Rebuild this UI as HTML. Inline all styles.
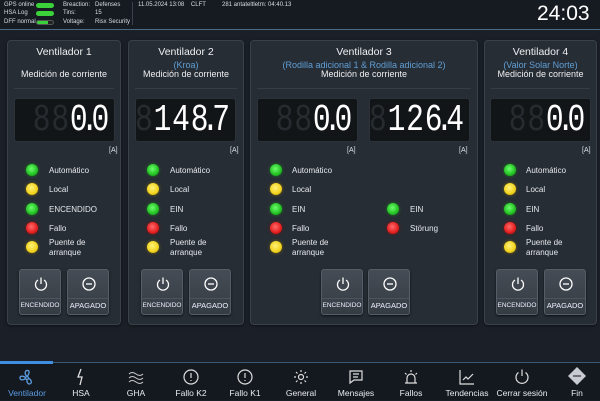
<!DOCTYPE html>
<html><head><meta charset="utf-8"><style>
*{margin:0;padding:0;box-sizing:border-box}
body{width:600px;height:400px;background:#1b2028;font-family:"Liberation Sans",sans-serif;color:#e6e9ec;position:relative;overflow:hidden}
.a{position:absolute;white-space:nowrap}
.top{position:absolute;left:0;top:0;width:600px;height:30px;background:#161b22;border-bottom:1px solid #4a6a85}
.s{font-size:6px;color:#d8dde2}
.pill{position:absolute;width:18px;height:5px;border-radius:3px;background:#3bd13b}
.panel{position:absolute;top:40px;height:285px;background:#272d35;border:1px solid #3a414a;border-radius:4px;box-shadow:0 1px 3px #0008}
.t{position:absolute;left:0;right:0;text-align:center;font-size:10.5px;color:#eef0f2}
.sub{color:#5f9fd6}
.hr{position:absolute;height:1px;background:#363d46;top:47px}
.disp{position:absolute;top:57px;height:44px;width:101px;background:#121518;border:1px solid #2c3238;border-radius:3px;overflow:hidden}
.num{position:absolute;right:4px;top:-1px;font-family:"Liberation Mono",monospace;font-size:38px;line-height:46px;color:#fff;letter-spacing:1px;transform:scaleX(.78);transform-origin:right}
.num .g{color:#262b30}
.num .p{margin:0 -10px 0 -10px}
.unit{position:absolute;top:106px;font-size:7px;color:#dfe3e6}
.led{position:absolute;width:12px;height:12px;border-radius:50%}
.gr{background:radial-gradient(circle at 45% 40%,#6bff6b,#22c022 60%,#137a13);box-shadow:0 0 3px #1d7a1d}
.ye{background:radial-gradient(circle at 45% 40%,#fff27a,#f2d21b 60%,#9a8210);box-shadow:0 0 3px #7a6a10}
.re{background:radial-gradient(circle at 45% 40%,#ff6a6a,#e41d1d 60%,#8a1010);box-shadow:0 0 3px #7a1515}
.lb{position:absolute;font-size:8px;color:#e6e9ec;line-height:9.5px}
.btn{position:absolute;top:228px;width:42px;height:46px;background:linear-gradient(#454c55,#363c44);border:1px solid #555d67;border-radius:3px;box-shadow:0 1px 2px #000a}
.btn svg{position:absolute;left:13px;top:6px}
.btn span{position:absolute;left:-4px;right:-4px;bottom:5px;text-align:center;font-size:6.5px;color:#eef}
.btn span.b{font-size:7.5px;bottom:4px}
.btn:before{content:"";position:absolute;left:0;right:0;top:28px;height:1px;background:#4d545c}
.nav{position:absolute;left:0;top:362px;width:600px;height:38px;background:#141920;border-top:1px solid #3b5a77}
.ni{position:absolute;top:0;width:54px;height:38px;text-align:center}
.ni span{position:absolute;left:-5px;right:-5px;top:25px;font-size:8.5px;color:#e8ebee}
.ni svg{position:absolute;left:18px;top:5px}
</style></head><body>
<div class="top">
<div class="a s" style="left:4px;top:2px">GPS online</div>
<div class="a s" style="left:4px;top:10px">HSA Log</div>
<div class="a s" style="left:4px;top:19px">DFF normal</div>
<div class="pill" style="left:36px;top:3px"></div>
<div class="pill" style="left:36px;top:11px"></div>
<div class="pill" style="left:36px;top:20px;background:linear-gradient(90deg,#3bd13b 70%,#222 70%);border:1px solid #555"></div>
<div class="a s" style="left:63px;top:2px">Breaction:</div>
<div class="a s" style="left:63px;top:10px">Tins:</div>
<div class="a s" style="left:63px;top:19px">Voltage:</div>
<div class="a s" style="left:95px;top:2px">Defenses</div>
<div class="a s" style="left:95px;top:10px">15</div>
<div class="a s" style="left:95px;top:19px">Risx Security</div>
<div class="a" style="left:132px;top:2px;width:1px;height:23px;background:#3a414a"></div>
<div class="a s" style="left:138px;top:2px">11.05.2024 13:08 &nbsp;&nbsp;&nbsp;CLFT</div>
<div class="a s" style="left:222px;top:2px">281 antateltletm: 04:40.13</div>
<div class="a" style="left:537px;top:2px;font-size:21px;color:#fff">24:03</div>
</div>

<!-- Panel 1 -->
<div class="panel" style="left:7px;width:114px">
<div class="t" style="top:5px">Ventilador 1</div>
<div class="t" style="top:28px;font-size:9px">Medición de corriente</div>
<div class="hr" style="left:6px;right:6px"></div>
<div class="disp" style="left:6px"><div class="num"><span class="g">88</span>0<span class="p">.</span>0</div></div>
<div class="unit" style="left:101px">[A]</div>
<div class="led gr" style="left:18px;top:123px"></div><div class="lb" style="left:41px;top:125px">Automático</div>
<div class="led ye" style="left:18px;top:142px"></div><div class="lb" style="left:41px;top:144px">Local</div>
<div class="led gr" style="left:18px;top:162px"></div><div class="lb" style="left:41px;top:164px">ENCENDIDO</div>
<div class="led re" style="left:18px;top:181px"></div><div class="lb" style="left:41px;top:183px">Fallo</div>
<div class="led ye" style="left:18px;top:200px"></div><div class="lb" style="left:41px;top:197px">Puente de<br>arranque</div>
<div class="btn" style="left:11px"><svg width="16" height="16" viewBox="0 0 16 16" fill="none" stroke="#fff" stroke-width="1.3"><path d="M5 4A5.5 5.5 0 1 0 11 4"/><path d="M8 1.5V8"/></svg><span>ENCENDIDO</span></div>
<div class="btn" style="left:59px"><svg width="16" height="16" viewBox="0 0 16 16" fill="none" stroke="#fff" stroke-width="1.3"><circle cx="8" cy="8" r="6"/><path d="M5 8h6"/></svg><span class="b">APAGADO</span></div>
</div>

<!-- Panel 2 -->
<div class="panel" style="left:128px;width:116px">
<div class="t" style="top:5px">Ventilador 2</div>
<div class="t sub" style="top:19px;font-size:9px">(Kroa)</div>
<div class="t" style="top:28px;font-size:9px">Medición de corriente</div>
<div class="hr" style="left:6px;right:6px"></div>
<div class="disp" style="left:6px"><div class="num"><span class="g">8</span>148<span class="p">.</span>7</div></div>
<div class="unit" style="left:101px">[A]</div>
<div class="led gr" style="left:18px;top:123px"></div><div class="lb" style="left:41px;top:125px">Automático</div>
<div class="led ye" style="left:18px;top:142px"></div><div class="lb" style="left:41px;top:144px">Local</div>
<div class="led gr" style="left:18px;top:162px"></div><div class="lb" style="left:41px;top:164px">EIN</div>
<div class="led re" style="left:18px;top:181px"></div><div class="lb" style="left:41px;top:183px">Fallo</div>
<div class="led ye" style="left:18px;top:200px"></div><div class="lb" style="left:41px;top:197px">Puente de<br>arranque</div>
<div class="btn" style="left:12px"><svg width="16" height="16" viewBox="0 0 16 16" fill="none" stroke="#fff" stroke-width="1.3"><path d="M5 4A5.5 5.5 0 1 0 11 4"/><path d="M8 1.5V8"/></svg><span>ENCENDIDO</span></div>
<div class="btn" style="left:60px"><svg width="16" height="16" viewBox="0 0 16 16" fill="none" stroke="#fff" stroke-width="1.3"><circle cx="8" cy="8" r="6"/><path d="M5 8h6"/></svg><span class="b">APAGADO</span></div>
</div>

<!-- Panel 3 -->
<div class="panel" style="left:250px;width:228px">
<div class="t" style="top:5px">Ventilador 3</div>
<div class="t sub" style="top:19px;font-size:9px">(Rodilla adicional 1 &amp; Rodilla adicional 2)</div>
<div class="t" style="top:28px;font-size:9px">Medición de corriente</div>
<div class="hr" style="left:6px;right:6px"></div>
<div class="disp" style="left:6px"><div class="num"><span class="g">88</span>0<span class="p">.</span>0</div></div>
<div class="disp" style="left:118px"><div class="num"><span class="g">8</span>126<span class="p">.</span>4</div></div>
<div class="unit" style="left:96px">[A]</div>
<div class="unit" style="left:208px">[A]</div>
<div class="led gr" style="left:19px;top:123px"></div><div class="lb" style="left:41px;top:125px">Automático</div>
<div class="led ye" style="left:19px;top:142px"></div><div class="lb" style="left:41px;top:144px">Local</div>
<div class="led gr" style="left:19px;top:162px"></div><div class="lb" style="left:41px;top:164px">EIN</div>
<div class="led re" style="left:19px;top:181px"></div><div class="lb" style="left:41px;top:183px">Fallo</div>
<div class="led ye" style="left:19px;top:200px"></div><div class="lb" style="left:41px;top:197px">Puente de<br>arranque</div>
<div class="led gr" style="left:136px;top:162px"></div><div class="lb" style="left:159px;top:164px">EIN</div>
<div class="led re" style="left:136px;top:181px"></div><div class="lb" style="left:159px;top:183px">Störung</div>
<div class="btn" style="left:70px"><svg width="16" height="16" viewBox="0 0 16 16" fill="none" stroke="#fff" stroke-width="1.3"><path d="M5 4A5.5 5.5 0 1 0 11 4"/><path d="M8 1.5V8"/></svg><span>ENCENDIDO</span></div>
<div class="btn" style="left:117px"><svg width="16" height="16" viewBox="0 0 16 16" fill="none" stroke="#fff" stroke-width="1.3"><circle cx="8" cy="8" r="6"/><path d="M5 8h6"/></svg><span class="b">APAGADO</span></div>
</div>

<!-- Panel 4 -->
<div class="panel" style="left:484px;width:113px">
<div class="t" style="top:5px">Ventilador 4</div>
<div class="t sub" style="top:19px;font-size:9px">(Valor Solar Norte)</div>
<div class="t" style="top:28px;font-size:9px">Medición de corriente</div>
<div class="hr" style="left:6px;right:6px"></div>
<div class="disp" style="left:5px"><div class="num"><span class="g">88</span>0<span class="p">.</span>0</div></div>
<div class="unit" style="left:97px">[A]</div>
<div class="led gr" style="left:19px;top:123px"></div><div class="lb" style="left:41px;top:125px">Automático</div>
<div class="led ye" style="left:19px;top:142px"></div><div class="lb" style="left:41px;top:144px">Local</div>
<div class="led gr" style="left:19px;top:162px"></div><div class="lb" style="left:41px;top:164px">EIN</div>
<div class="led re" style="left:19px;top:181px"></div><div class="lb" style="left:41px;top:183px">Fallo</div>
<div class="led ye" style="left:19px;top:200px"></div><div class="lb" style="left:41px;top:197px">Puente de<br>arranque</div>
<div class="btn" style="left:11px"><svg width="16" height="16" viewBox="0 0 16 16" fill="none" stroke="#fff" stroke-width="1.3"><path d="M5 4A5.5 5.5 0 1 0 11 4"/><path d="M8 1.5V8"/></svg><span>ENCENDIDO</span></div>
<div class="btn" style="left:59px"><svg width="16" height="16" viewBox="0 0 16 16" fill="none" stroke="#fff" stroke-width="1.3"><circle cx="8" cy="8" r="6"/><path d="M5 8h6"/></svg><span class="b">APAGADO</span></div>
</div>

<div class="nav">
<div class="a" style="left:0;top:-2px;width:53px;height:3px;background:#3f8ee0"></div>
<div class="ni" style="left:0"><svg width="18" height="18" viewBox="0 0 18 18" fill="none" stroke="#5b9be0" stroke-width="1.3"><circle cx="9" cy="10" r="1.5"/><path d="M9 8.5C6 6 7 2 10 2.5c2 .5 1 4-1 6M10.5 10.5c3 1 4 5 1 5.5c-2 .3-3-3-2.5-5M7.5 10.5c-2 2-6 2-5.5-1c.4-2 3.5-1.5 5.5 0"/></svg><span style="color:#5b9be0">Ventilador</span></div>
<div class="ni" style="left:54px"><svg width="18" height="18" viewBox="0 0 18 18" fill="none" stroke="#ddd" stroke-width="1.3"><path d="M9 1L6 9h4l-2 8"/></svg><span>HSA</span></div>
<div class="ni" style="left:109px"><svg width="18" height="18" viewBox="0 0 18 18" fill="none" stroke="#ccc" stroke-width="1"><path d="M2 6q3-3 7 0t7 0M2 10q3-3 7 0t7 0M2 14q3-3 7 0t7 0"/></svg><span>GHA</span></div>
<div class="ni" style="left:164px"><svg width="18" height="18" viewBox="0 0 18 18" fill="none" stroke="#ddd" stroke-width="1.2"><circle cx="9" cy="9" r="7"/><path d="M9 5v5M9 12v1"/></svg><span>Fallo K2</span></div>
<div class="ni" style="left:218px"><svg width="18" height="18" viewBox="0 0 18 18" fill="none" stroke="#ddd" stroke-width="1.2"><circle cx="9" cy="9" r="7"/><path d="M9 5v5M9 12v1"/></svg><span>Fallo K1</span></div>
<div class="ni" style="left:274px"><svg width="18" height="18" viewBox="0 0 18 18" fill="none" stroke="#ddd" stroke-width="1.2"><circle cx="9" cy="9" r="2.5"/><path d="M9 2v2M9 14v2M2 9h2M14 9h2M4 4l1.5 1.5M12.5 12.5L14 14M4 14l1.5-1.5M12.5 5.5L14 4"/></svg><span>General</span></div>
<div class="ni" style="left:329px"><svg width="18" height="18" viewBox="0 0 18 18" fill="none" stroke="#ddd" stroke-width="1.2"><path d="M3 3h12v9H7l-4 3z"/><path d="M6 6h6M6 9h5"/></svg><span>Mensajes</span></div>
<div class="ni" style="left:384px"><svg width="18" height="18" viewBox="0 0 18 18" fill="none" stroke="#ddd" stroke-width="1.2"><path d="M5 15V10a4 4 0 0 1 8 0v5M3 15h12M9 2v2M3 5l1.5 1.5M15 5l-1.5 1.5"/></svg><span>Fallos</span></div>
<div class="ni" style="left:440px"><svg width="18" height="18" viewBox="0 0 18 18" fill="none" stroke="#ddd" stroke-width="1.2"><path d="M2 2v14h14M5 12l3-3 2 2 5-5"/></svg><span>Tendencias</span></div>
<div class="ni" style="left:495px"><svg width="18" height="18" viewBox="0 0 18 18" fill="none" stroke="#ddd" stroke-width="1.2"><path d="M5.5 4.5A6 6 0 1 0 12.5 4.5"/><path d="M9 1.5V8"/></svg><span>Cerrar sesión</span></div>
<div class="ni" style="left:550px"><svg width="20" height="20" viewBox="0 0 20 20" style="left:17px;top:3px"><path d="M10 1L19 10L10 19L1 10Z" fill="#c8ccd2"/><path d="M6 10h8" stroke="#333" stroke-width="1.2"/></svg><span>Fin</span></div>
</div>
</body></html>
